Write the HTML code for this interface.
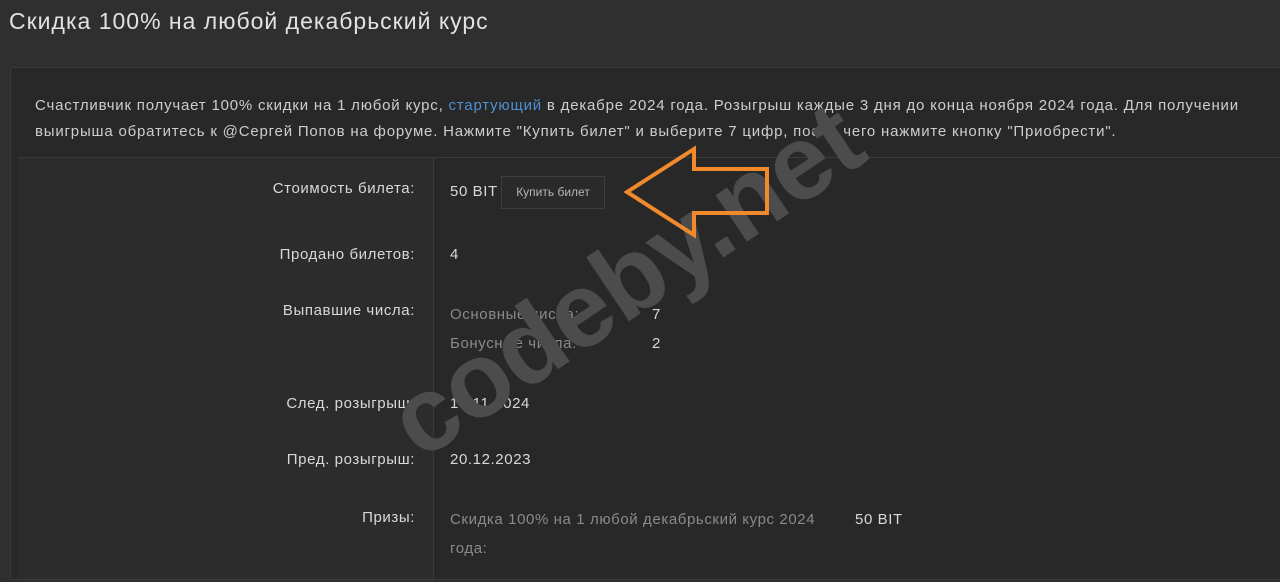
<!DOCTYPE html>
<html><head><meta charset="utf-8"><style>
body{margin:0;width:1280px;height:582px;background:#2f2f2f;font-family:"Liberation Sans",sans-serif;overflow:hidden;position:relative;color:#d0d0d0}
.title{position:absolute;left:9px;top:8px;font-size:23px;color:#e2e2e2;letter-spacing:1px}
.panel{position:absolute;left:10px;top:67px;width:1290px;height:511px;background:#282828;border:1px solid #3a3a3a;border-radius:3px}
.intro{position:absolute;left:35px;top:93px;font-size:15px;line-height:26px;color:#cdcdcd;white-space:nowrap;letter-spacing:0.8px}
.intro a{color:#4f8fd0}
.left{position:absolute;left:18px;top:157px;width:415px;height:421px;background:#2c2c2c;border-top:1px solid #3a3a3a;border-right:1px solid #3a3a3a}
.right{position:absolute;left:434px;top:157px;width:846px;height:421px;border-top:1px solid #3a3a3a}
.lab{position:absolute;right:865px;font-size:15px;color:#d8d8d8;white-space:nowrap;letter-spacing:0.6px}
.val{position:absolute;left:450px;font-size:15px;color:#d8d8d8;white-space:nowrap;letter-spacing:0.6px}
.dim{color:#8a8a8a}
.btn{position:absolute;left:501px;top:176px;width:102px;height:31px;border:1px solid #3e3e3e;background:#2a2a2a;font-size:12px;color:#b5b5b5;line-height:31px;text-align:center}
.wm{position:absolute;left:355px;top:220px;font-size:106px;font-weight:bold;color:#4c4c4c;transform:rotate(-34deg);transform-origin:center;white-space:nowrap;letter-spacing:-1px}
</style></head><body>
<div class="title">Скидка 100% на любой декабрьский курс</div>
<div class="panel"></div>
<div class="intro">Счастливчик получает 100% скидки на 1 любой курс, <a>стартующий</a> в декабре 2024 года. Розыгрыш каждые 3 дня до конца ноября 2024 года. Для получении<br>выигрыша обратитесь к @Сергей Попов на форуме. Нажмите "Купить билет" и выберите 7 цифр, после чего нажмите кнопку "Приобрести".</div>
<div class="left"></div><div class="right"></div>
<div class="lab" style="top:180px">Стоимость билета:</div>
<div class="val" style="top:183px">50 BIT</div>
<div class="btn">Купить билет</div>
<div class="lab" style="top:246px">Продано билетов:</div>
<div class="val" style="top:246px">4</div>
<div class="lab" style="top:302px">Выпавшие числа:</div>
<div class="val dim" style="top:306px">Основные числа:</div><div class="val" style="top:306px;left:652px">7</div>
<div class="val dim" style="top:335px">Бонусные числа:</div><div class="val" style="top:335px;left:652px">2</div>
<div class="lab" style="top:395px">След. розыгрыш:</div>
<div class="val" style="top:395px">14.11.2024</div>
<div class="lab" style="top:451px">Пред. розыгрыш:</div>
<div class="val" style="top:451px">20.12.2023</div>
<div class="lab" style="top:509px">Призы:</div>
<div class="val dim" style="top:511px">Скидка 100% на 1 любой декабрьский курс 2024</div>
<div class="val" style="top:511px;left:855px">50 BIT</div>
<div class="val dim" style="top:540px">года:</div>
<div class="wm">codeby.net</div>
<svg style="position:absolute;left:0;top:0" width="1280" height="582"><polygon points="627,192 694,149 694,169 767,169 767,213 694,213 694,235" fill="none" stroke="#f08a2c" stroke-width="4" stroke-linejoin="miter"/></svg>
</body></html>
